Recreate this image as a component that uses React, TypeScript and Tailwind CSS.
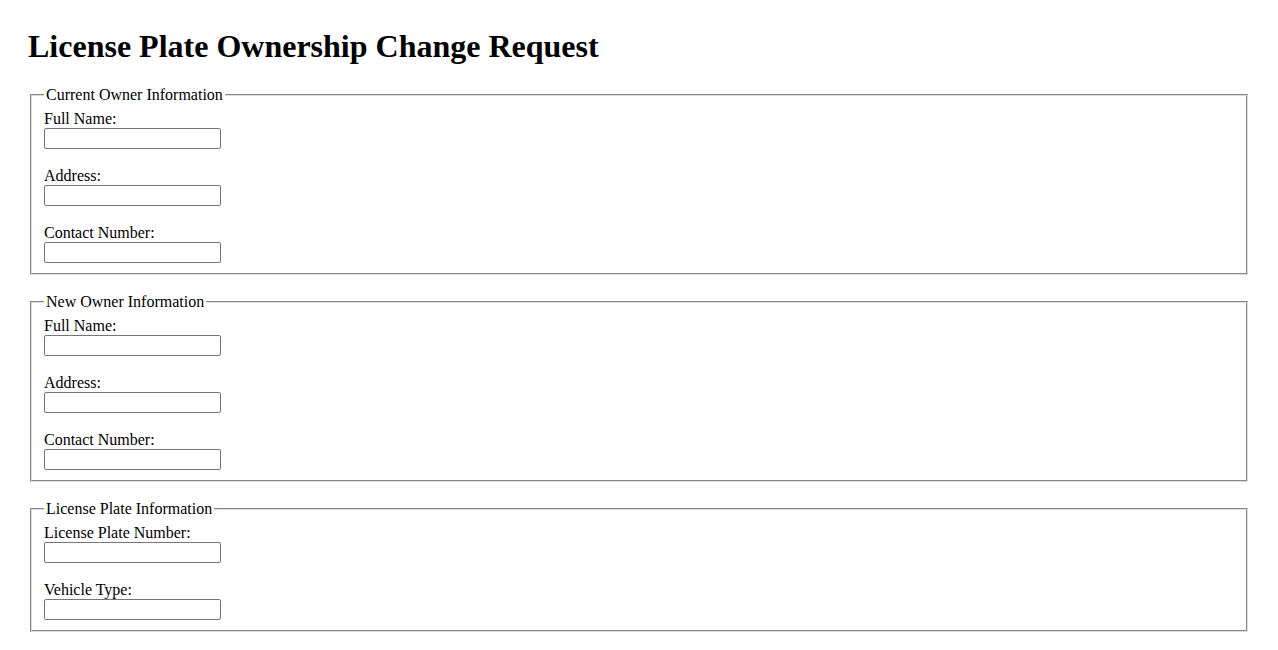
import React from 'react';

type Field = { label: string };
type Section = { title: string; fields: Field[] };

const sections: Section[] = [
  {
    title: 'Current Owner Information',
    fields: [{ label: 'Full Name:' }, { label: 'Address:' }, { label: 'Contact Number:' }],
  },
  {
    title: 'New Owner Information',
    fields: [{ label: 'Full Name:' }, { label: 'Address:' }, { label: 'Contact Number:' }],
  },
  {
    title: 'License Plate Information',
    fields: [{ label: 'License Plate Number:' }, { label: 'Vehicle Type:' }],
  },
];

export default function App() {
  return (
    <div className="min-h-screen bg-white px-[28px] pt-[28px] pb-[20px] font-['Liberation_Serif','Times_New_Roman',serif] text-[16px] text-black">
      <h1 className="text-[32px] font-bold leading-[36px] mb-[22px]">License Plate Ownership Change Request</h1>

      <form>
        {sections.map((s, i) => (
          <fieldset
            key={i}
            className="mx-[2px] mb-[18px] border-2 border-[#dcdcdc] [border-style:groove] px-[12px] pt-[6px] pb-[10px]"
          >
            <legend className="px-[2px] leading-[18px]">{s.title}</legend>
            {s.fields.map((f, j) => (
              <div key={j} className={j < s.fields.length - 1 ? 'mb-[18px]' : ''}>
                <label className="block leading-[18px]">{f.label}</label>
                <input
                  type="text"
                  className="block w-[177px] h-[21px] border border-[#767676] rounded-[2px] px-[2px] text-[13px] font-['Liberation_Sans',Arial,sans-serif]"
                />
              </div>
            ))}
          </fieldset>
        ))}
      </form>
    </div>
  );
}
